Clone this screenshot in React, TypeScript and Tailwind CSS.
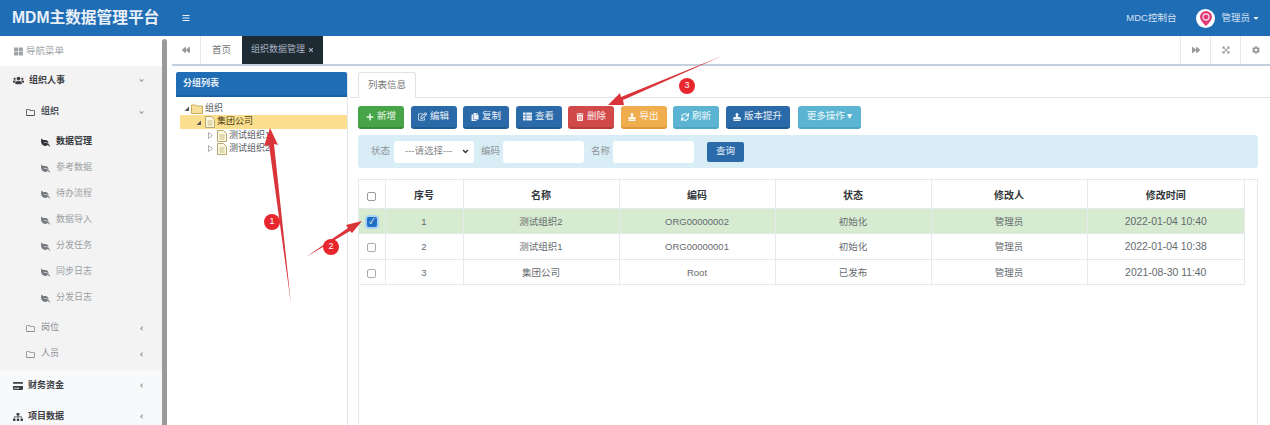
import type { ReactNode } from 'react'
import {
  FaAngleDown,
  FaAngleLeft,
  FaBackward,
  FaBars,
  FaCaretDown,
  FaCog,
  FaCopy,
  FaCreditCard,
  FaExpandArrowsAlt,
  FaForward,
  FaLeaf,
  FaPlus,
  FaRegEdit,
  FaRegFolder,
  FaSitemap,
  FaStamp,
  FaSync,
  FaThLarge,
  FaThList,
  FaTimes,
  FaTrashAlt,
  FaUsers
} from 'react-icons/fa'

const leaves = ['数据管理', '参考数据', '待办流程', '数据导入', '分发任务', '同步日志', '分发日志']

const rows = [
  { no: 1, name: '测试组织2', code: 'ORG00000002', state: '初始化', user: '管理员', time: '2022-01-04 10:40' },
  { no: 2, name: '测试组织1', code: 'ORG00000001', state: '初始化', user: '管理员', time: '2022-01-04 10:38' },
  { no: 3, name: '集团公司', code: 'Root', state: '已发布', user: '管理员', time: '2021-08-30 11:40' }
]

function DocIcon() {
  return (
    <svg width="10" height="12" viewBox="0 0 10 12" className="shrink-0">
      <path d="M0.5 0.5h6l3 3v8h-9z" fill="#fbf6dc" stroke="#b5a872" />
      <path d="M2.5 5h5M2.5 7h5M2.5 9h5" stroke="#c9bd8a" />
    </svg>
  )
}

function FolderIcon() {
  return (
    <svg width="12" height="10" viewBox="0 0 12 10" className="shrink-0">
      <path d="M0.5 2V1h4l1 1h6v7.5h-11z" fill="#f7e09a" stroke="#c9ab55" />
    </svg>
  )
}

function TreeArrow({ open }: { open?: boolean }) {
  return (
    <svg width="5" height="7" viewBox="0 0 5 7" className="shrink-0">
      {open ? (
        <path d="M5 1.500V6H0.500z" fill="#555" />
      ) : (
        <path d="M0.500 0.500L4.500 3.500L0.500 6.500z" fill="none" stroke="#b0b0b0" />
      )}
    </svg>
  )
}

function ToolButton({ color, icon, label, className }: { color: string; icon: ReactNode; label: string; className?: string }) {
  return (
    <button className={`h-[23px] rounded-[3px] flex items-center justify-center gap-[3px] text-[9.5px] text-white/90 border-b-2 ${color} ${className ?? 'w-[46px]'}`}>
      {icon}
      {label}
    </button>
  )
}

function SubRow({ label, open, dim }: { label: string; open?: boolean; dim?: boolean }) {
  return (
    <div className={`h-[26px] pl-[26px] pr-[17px] flex items-center gap-[6px] text-[9px] ${dim ? 'text-[#8a8f94]' : 'text-[#4c5157] font-bold'}`}>
      <FaRegFolder className="w-[9px] h-[9px]" />
      <span className="flex-1">{label}</span>
      {open ? <FaAngleDown className="w-[7px] h-[7px] text-[#999]" /> : <FaAngleLeft className="w-[7px] h-[7px] text-[#999]" />}
    </div>
  )
}

function Sidebar() {
  return (
    <aside className="w-[162px] shrink-0 bg-[#f8f9fa] text-[9px] overflow-hidden">
      <div className="h-[30px] bg-white pl-[14px] flex items-center gap-[3px] text-[9.5px] text-[#a0a4a8]">
        <FaThLarge className="w-[9px] h-[9px]" />
        导航菜单
      </div>
      <div className="bg-[#f3f3f4] h-[304px]">
        <div className="h-[29px] pl-[13px] pr-[17px] flex items-center gap-[5px] font-bold text-[#3c4045]">
          <FaUsers className="w-[11px] h-[11px]" />
          <span className="flex-1">组织人事</span>
          <FaAngleDown className="w-[7px] h-[7px] text-[#999]" />
        </div>
        <div className="h-[34px] flex items-center">
          <div className="flex-1"><SubRow label="组织" open /></div>
        </div>
        {leaves.map((leaf, i) => (
          <div
            key={leaf}
            className={`h-[26px] pl-[41px] flex items-center gap-[6px] ${i === 0 ? 'text-[#34383c] font-bold' : 'text-[#9a9ea3]'}`}
          >
            <FaLeaf className={`w-[9px] h-[9px] -scale-x-100 ${i === 0 ? 'text-[#2f3337]' : 'text-[#777b80]'}`} />
            {leaf}
          </div>
        ))}
        <div className="h-[4px]" />
        <SubRow label="岗位" dim />
        <SubRow label="人员" dim />
      </div>
      <div className="h-[31px] pl-[13px] pr-[17px] flex items-center gap-[5px] font-bold text-[#3c4045]">
        <FaCreditCard className="w-[10px] h-[10px]" />
        <span className="flex-1">财务资金</span>
        <FaAngleLeft className="w-[7px] h-[7px] text-[#999]" />
      </div>
      <div className="h-[31px] pl-[13px] pr-[17px] flex items-center gap-[5px] font-bold text-[#3c4045]">
        <FaSitemap className="w-[10px] h-[10px]" />
        <span className="flex-1">项目数据</span>
        <FaAngleLeft className="w-[7px] h-[7px] text-[#999]" />
      </div>
    </aside>
  )
}

function TreePanel() {
  return (
    <section className="w-[172px] shrink-0 border-r border-[#e4e7ea] text-[9px] text-[#55595e]">
      <div className="h-[25px] bg-[#1f6db5] rounded-t-[2px] border-b-2 border-[#1a5f9f] pl-[7px] flex items-center text-white/90 font-bold">
        分组列表
      </div>
      <div className="pt-[5px]">
        <div className="h-[13px] pl-[8px] flex items-center gap-[2px]">
          <TreeArrow open />
          <FolderIcon />
          组织
        </div>
        <div className="h-[14px] ml-[4px] pl-[16px] bg-[#fbdf8e] flex items-center text-[#4b3f15]">
          <TreeArrow open />
          <span className="w-[4px]" />
          <DocIcon />
          <span className="ml-[2px]">集团公司</span>
        </div>
        {['测试组织1', '测试组织2'].map(name => (
          <div key={name} className="h-[13px] pl-[32px] flex items-center">
            <TreeArrow />
            <span className="w-[4px]" />
            <DocIcon />
            <span className="ml-[2px]">{name}</span>
          </div>
        ))}
      </div>
    </section>
  )
}

function ListPanel() {
  const th = 'pt-[3px] text-[10px] font-bold text-[#33373b] border-r border-[#e7eaec]'
  const td = 'pt-[2px] border-r border-[#e7eaec]'
  return (
    <section className="flex-1 min-w-0 pl-[2px] text-[9.5px] text-[#666a6f]">
      <div className="h-[26px] border-b border-[#dfe3e6] pl-[8px] flex">
        <div className="w-[58px] h-[26px] border border-b-white border-[#dfe3e6] rounded-t-[3px] bg-white flex items-center justify-center text-[#777]">
          列表信息
        </div>
      </div>
      <div className="pl-[8px] pr-[12px]">
        <div className="mt-[8px] flex gap-[6.5px]">
          <ToolButton color="bg-[#47a447] border-[#3a8c3a]" icon={<FaPlus className="w-[8px] h-[8px]" />} label="新增" />
          <ToolButton color="bg-[#2a6aa8] border-[#235b91]" icon={<FaRegEdit className="w-[9px] h-[9px]" />} label="编辑" />
          <ToolButton color="bg-[#2a6aa8] border-[#235b91]" icon={<FaCopy className="w-[8px] h-[8px]" />} label="复制" />
          <ToolButton color="bg-[#2a6aa8] border-[#235b91]" icon={<FaThList className="w-[9px] h-[9px]" />} label="查看" />
          <ToolButton color="bg-[#d2494a] border-[#b93d3e]" icon={<FaTrashAlt className="w-[8px] h-[8px]" />} label="删除" />
          <ToolButton color="bg-[#efad4d] border-[#dd9b3c]" icon={<FaStamp className="w-[8px] h-[8px]" />} label="导出" />
          <ToolButton color="bg-[#5bb5d2] border-[#4ea6c3]" icon={<FaSync className="w-[8px] h-[8px]" />} label="刷新" />
          <ToolButton color="bg-[#2a6aa8] border-[#235b91]" className="w-[64px]" icon={<FaStamp className="w-[8px] h-[8px]" />} label="版本提升" />
          <ToolButton color="bg-[#5bb5d2] border-[#4ea6c3] ml-[2px]" className="w-[63px]" icon={null} label="更多操作 ▾" />
        </div>
        <div className="mt-[6px] h-[33px] bg-[#d9edf6] rounded-[3px] pl-[13px] flex items-center text-[#8d9398]">
          <span>状态</span>
          <div className="ml-[4px] w-[80px] h-[22px] bg-white rounded-[3px] flex items-center justify-between pl-[11px] pr-[4px] text-[#888]">
            ---请选择---
            <FaAngleDown className="w-[9px] h-[9px] text-[#333]" />
          </div>
          <span className="ml-[7px]">编码</span>
          <div className="ml-[3px] w-[81px] h-[22px] bg-white rounded-[3px]" />
          <span className="ml-[7px]">名称</span>
          <div className="ml-[3px] w-[81px] h-[22px] bg-white rounded-[3px]" />
          <button className="ml-[13px] w-[37px] h-[20px] bg-[#2a6aa8] rounded-[2px] text-white/90 text-[9.5px]">查询</button>
        </div>
        <div className="mt-[11px] h-[300px] border border-[#e7eaec] pr-[12px]">
          <table className="w-full table-fixed border-collapse text-center">
            <colgroup>
              <col className="w-[26px]" />
              <col className="w-[78px]" />
              <col className="w-[156px]" />
              <col className="w-[156px]" />
              <col className="w-[156px]" />
              <col className="w-[156px]" />
              <col />
            </colgroup>
            <thead>
              <tr className="h-[28px] border-b border-[#e7eaec]">
                <th className={th}><span className="inline-block align-middle w-[9px] h-[9px] border border-[#999] rounded-[2px]" /></th>
                <th className={th}>序号</th>
                <th className={th}>名称</th>
                <th className={th}>编码</th>
                <th className={th}>状态</th>
                <th className={th}>修改人</th>
                <th className={th}>修改时间</th>
              </tr>
            </thead>
            <tbody>
              {rows.map((row, i) => (
                <tr key={row.no} className={`h-[25.5px] border-b border-[#e7eaec] ${i === 0 ? 'bg-[#d6ebd0]' : 'bg-white'}`}>
                  <td className={td}>
                    {i === 0 ? (
                      <span className="inline-flex align-middle items-center justify-center w-[10px] h-[10px] bg-[#1f6fc4] rounded-[2px] text-white text-[8px] leading-none ring-2 ring-[#a9d3f5]">✓</span>
                    ) : (
                      <span className="inline-block align-middle w-[9px] h-[9px] border border-[#aaa] rounded-[2px]" />
                    )}
                  </td>
                  <td className={td}>{row.no}</td>
                  <td className={td}>{row.name}</td>
                  <td className={td}>{row.code}</td>
                  <td className={td}>{row.state}</td>
                  <td className={td}>{row.user}</td>
                  <td className={`${td} text-[10.4px]`}>{row.time}</td>
                </tr>
              ))}
            </tbody>
          </table>
        </div>
      </div>
    </section>
  )
}

function Annotations() {
  const badges = [
    { n: 1, pos: 'left-[264px] top-[214px]' },
    { n: 2, pos: 'left-[323px] top-[239px]' },
    { n: 3, pos: 'left-[679px] top-[78px]' }
  ]
  return (
    <>
      <svg className="absolute inset-0 pointer-events-none" width="1270" height="425">
        <polygon points="291,304 274,144 278,145 270,128 264,146 269,145" fill="#d9343a" />
        <polygon points="306,257 348,228 346,225 362,221 352,233 350,231" fill="#d9343a" />
        <polygon points="722,56 621,97 620,93 608,105 624,105 623,100" fill="#d9343a" />
      </svg>
      {badges.map(b => (
        <div
          key={b.n}
          className={`absolute w-[16px] h-[16px] rounded-full bg-[#e8262d] text-white text-[9px] flex items-center justify-center ${b.pos}`}
        >
          {b.n}
        </div>
      ))}
    </>
  )
}

export default function App() {
  return (
    <div className="relative w-[1270px] h-[425px] overflow-hidden bg-white flex flex-col font-['Liberation_Sans','Noto_Sans_CJK_SC',sans-serif]">
      <header className="h-[36px] shrink-0 bg-[#1f6db5] flex items-center pl-[12px] pr-[10px] text-white">
        <div className="w-[170px] text-[15.7px] font-bold whitespace-nowrap text-white/90">MDM主数据管理平台</div>
        <FaBars className="w-[8px] h-[8px] text-white/90" />
        <div className="flex-1" />
        <span className="text-[9.5px] text-white/80">MDC控制台</span>
        <div className="ml-[20px] w-[19px] h-[19px] rounded-full bg-white flex items-center justify-center">
          <svg width="12" height="15" viewBox="0 0 12 15">
            <path d="M6 0a6 6 0 0 1 6 6c0 3.5-4 7-6 9-2-2-6-5.500-6-9a6 6 0 0 1 6-6z" fill="#e23a78" />
            <circle cx="6" cy="6" r="3" fill="none" stroke="#f8d0df" strokeWidth="1.300" />
          </svg>
        </div>
        <span className="ml-[6px] text-[9.5px] text-white/80">管理员</span>
        <FaCaretDown className="ml-[2px] w-[8px] h-[8px]" />
      </header>

      <div className="flex-1 flex min-h-0">
        <Sidebar />
        <div className="w-[5px] shrink-0 bg-[#9a9a9a] rounded-t-[3px] mt-[3px]" />
        <div className="w-[5px] shrink-0" />
        <main className="flex-1 min-w-0 flex flex-col">
          <div className="h-[30px] shrink-0 border-b-2 border-[#c2d0de] flex items-center text-[9.5px]">
            <div className="w-[29px] h-full border-r border-[#e7eaec] flex items-center justify-center text-[#999]">
              <FaBackward className="w-[8px] h-[8px]" />
            </div>
            <div className="w-[41px] h-full flex items-center justify-center text-[#777]">首页</div>
            <div className="w-[81px] h-full bg-[#1f2b33] flex items-center justify-center gap-[3px] text-[#a7b1c2]">
              <span className="text-[9px]">组织数据管理</span>
              <FaTimes className="w-[6px] h-[6px]" />
            </div>
            <div className="flex-1" />
            {[FaForward, FaExpandArrowsAlt, FaCog].map((Icon, i) => (
              <div key={i} className="w-[30px] h-full border-l border-[#e7eaec] flex items-center justify-center text-[#999]">
                <Icon className="w-[8px] h-[8px]" />
              </div>
            ))}
          </div>
          <div className="flex-1 min-h-0 flex pl-[4px] pt-[6px]">
            <TreePanel />
            <ListPanel />
          </div>
        </main>
      </div>

      <Annotations />
    </div>
  )
}
